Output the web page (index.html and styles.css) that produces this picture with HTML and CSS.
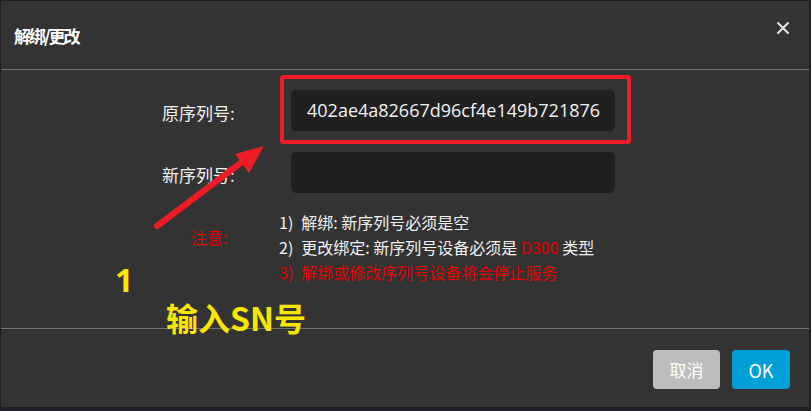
FILE: index.html
```html
<!DOCTYPE html>
<html lang="zh-CN">
<head>
<meta charset="utf-8">
<title>解绑/更改</title>
<link rel="stylesheet" href="styles.css">
</head>
<body>
<div class="dialog">
  <div class="dialog-header">
    <div class="dialog-title">解绑/更改</div>
    <div class="dialog-close">
      <svg width="12" height="12" viewBox="0 0 12 12"><path d="M1 1 L11 11 M11 1 L1 11" stroke="#e6e6e6" stroke-width="2" stroke-linecap="round"/></svg>
    </div>
  </div>
  <div class="dialog-body">
    <div class="form-row">
      <div class="form-label">原序列号:</div>
      <div class="form-input">402ae4a82667d96cf4e149b721876</div>
    </div>
    <div class="form-row">
      <div class="form-label">新序列号:</div>
      <div class="form-input"></div>
    </div>
    <div class="note-row">
      <div class="note-label">注意:</div>
      <div class="note-list">
        <div class="note-line"><span class="num">1)</span>解绑: 新序列号必须是空</div>
        <div class="note-line"><span class="num">2)</span>更改绑定: 新序列号设备必须是 <span class="red">D300</span> 类型</div>
        <div class="note-line red"><span class="num">3)</span>解绑或修改序列号设备将会停止服务</div>
      </div>
    </div>
  </div>
  <div class="dialog-footer">
    <button class="btn btn-cancel">取消</button>
    <button class="btn btn-ok">OK</button>
  </div>
</div>

<div class="mark-box"></div>
<div class="mark-num">1</div>
<div class="mark-text">输入SN号</div>
<svg class="mark-arrow" width="811" height="411" viewBox="0 0 811 411">
  <line x1="157" y1="226" x2="246" y2="159" stroke="#ee1c25" stroke-width="6" stroke-linecap="round"/>
  <polygon points="264,146 235,154 249,173" fill="#ee1c25"/>
</svg>
</body>
</html>
```
FILE: styles.css
```css
html, body {
  margin: 0;
  padding: 0;
}
body {
  width: 811px;
  height: 411px;
  background: #1f1f24;
  font-family: "Noto Sans CJK SC", "Noto Sans", sans-serif;
  color: #f2f2f2;
  overflow: hidden;
  position: relative;
}
.dialog {
  margin: 1px 0 0 1px;
  width: 808px;
  height: 406px;
  background: #333333;
  display: flex;
  flex-direction: column;
}
.dialog-header {
  height: 68px;
  border-bottom: 1px solid #727272;
  display: flex;
  align-items: center;
  justify-content: space-between;
  padding: 0 20px 0 13px;
}
.dialog-title {
  font-size: 17px;
  font-weight: bold;
  color: #ffffff;
  letter-spacing: -2px;
}
.dialog-close {
  align-self: flex-start;
  margin-top: 21px;
  width: 12px;
  height: 12px;
  display: flex;
}
.dialog-body {
  height: 258px;
  padding-top: 20px;
  box-sizing: border-box;
  display: flex;
  flex-direction: column;
}
.form-row {
  display: flex;
  align-items: center;
  margin-bottom: 21px;
}
.form-label {
  width: 129px;
  padding-left: 161px;
  font-size: 17px;
  color: #f2f2f2;
  padding-top: 4px;
}
.form-input {
  width: 324px;
  height: 41px;
  box-sizing: border-box;
  background: #202020;
  border-radius: 5px;
  padding-left: 16px;
  font-family: "Open Sans", "Noto Sans", sans-serif;
  font-size: 18px;
  line-height: 41px;
  color: #f2f2f2;
}
.note-row {
  display: flex;
  margin-top: -4px;
}
.note-label {
  width: 88px;
  padding-left: 190px;
  font-size: 16px;
  color: #e60000;
  padding-top: 15px;
}
.note-list {
  display: flex;
  flex-direction: column;
}
.note-line {
  font-size: 16px;
  line-height: 25px;
  color: #f2f2f2;
  white-space: nowrap;
}
.note-line .num {
  margin-right: 8px;
}
.red {
  color: #e60000;
}
.note-line.red {
  color: #e60000;
}
.dialog-footer {
  flex: 1;
  border-top: 1px solid #727272;
  display: flex;
  justify-content: flex-end;
  align-items: flex-start;
  padding: 21px 19px 0 0;
  gap: 12px;
}
.btn {
  height: 39px;
  border: none;
  border-radius: 4px;
  color: #ffffff;
  font-family: "Noto Sans CJK SC", "Noto Sans", sans-serif;
  font-size: 17px;
  padding: 0;
}
.btn-cancel {
  width: 67px;
  background: #bdbdbd;
}
.btn-ok {
  width: 58px;
  background: #00a0d7;
  font-size: 18px;
}
.mark-box {
  position: absolute;
  left: 280px;
  top: 75px;
  width: 351px;
  height: 69px;
  box-sizing: border-box;
  border: 4px solid #ee1c25;
  border-radius: 3px;
}
.mark-num {
  position: absolute;
  left: 115px;
  top: 258px;
  font-family: "Noto Sans", sans-serif;
  font-weight: bold;
  font-size: 32px;
  color: #f7e600;
}
.mark-text {
  position: absolute;
  left: 166px;
  top: 294px;
  font-family: "Noto Sans CJK SC", sans-serif;
  font-weight: bold;
  font-size: 32px;
  line-height: 46px;
  color: #f7e600;
}
.mark-arrow {
  position: absolute;
  left: 0;
  top: 0;
  pointer-events: none;
}
```
